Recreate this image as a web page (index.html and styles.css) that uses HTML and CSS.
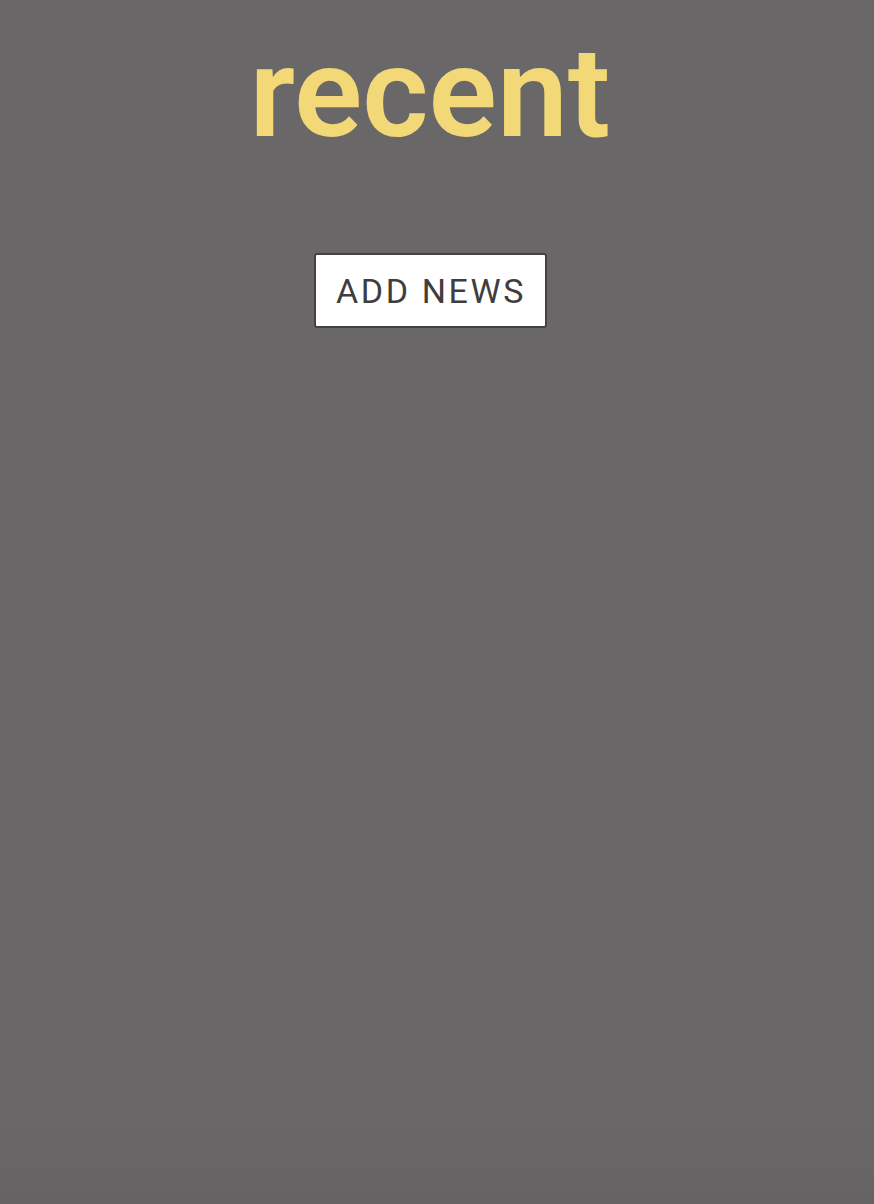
FILE: index.html
```html
<!DOCTYPE html>
<html>
<head>
<meta charset="utf-8">
<link rel="stylesheet" href="styles.css">
</head>
<body>
<main class="page">
  <h1 class="title">recent</h1>
  <button class="add-btn">ADD NEWS</button>
</main>
</body>
</html>
```
FILE: styles.css
```css
html, body {
  margin: 0;
  padding: 0;
  height: 100%;
}
body {
  background: #696768;
  font-family: Roboto, "Liberation Sans", sans-serif;
}
.page {
  min-height: 1204px;
  box-sizing: border-box;
  display: flex;
  flex-direction: column;
  align-items: center;
  padding-right: 14px;
  background: linear-gradient(to bottom, rgba(0,0,0,0) 92%, rgba(0,0,0,0.04) 100%);
}
.title {
  margin: 18px 0 0 0;
  font-size: 127px;
  font-weight: 600;
  line-height: 150px;
  color: #f3d877;
}
.add-btn {
  margin-top: 85px;
  width: 233px;
  height: 75px;
  background: #ffffff;
  border: 2px solid #444243;
  border-radius: 3px;
  color: #3f3d3e;
  font-family: Roboto, "Liberation Sans", sans-serif;
  font-size: 34px;
  font-weight: 400;
  letter-spacing: 2.6px;
  padding: 0 0 0 2px;
  cursor: pointer;
}
```
